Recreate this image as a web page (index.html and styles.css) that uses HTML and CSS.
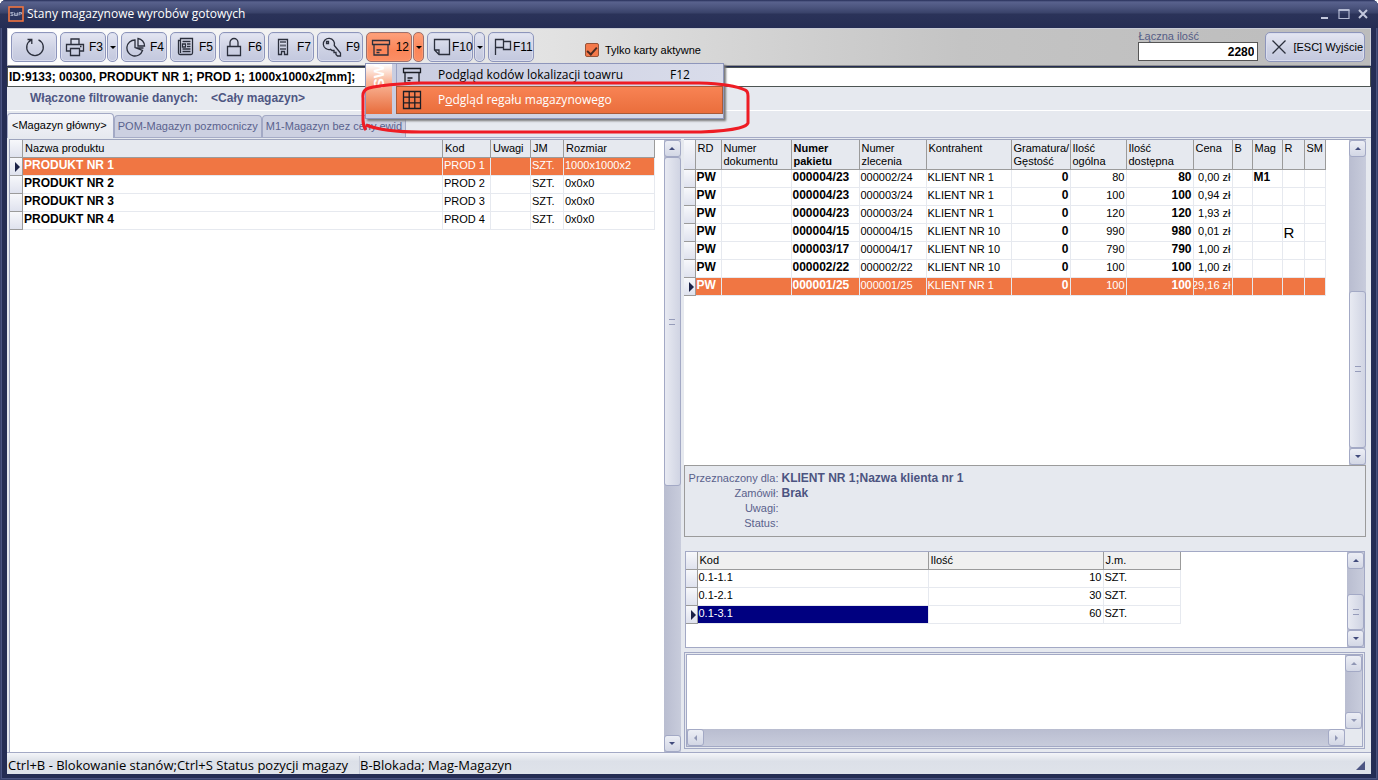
FILE: index.html
```html
<!DOCTYPE html>
<html lang="pl">
<head>
<meta charset="utf-8">
<title>Stany magazynowe wyrobów gotowych</title>
<link rel="stylesheet" href="styles.css">
</head>
<body>
<div class="window">
  <header class="titlebar">
    <svg class="app-icon" width="16" height="16" viewBox="0 0 16 16"><rect x="1" y="1" width="14" height="14" fill="#2b355f" stroke="#f0743f" stroke-width="1.6"/><path d="M2.500 6.500H5.500M3 6.500V8H5V9.500H2.500M6.500 6.500V9.500H9.500V6.500M8 7V9.500M11 9.500V6.500H13.500V8H11" stroke="#b9c0d8" stroke-width=".8" fill="none"/></svg>
    <h1>Stany magazynowe wyrobów gotowych</h1>
    <div class="win-buttons">
      <button aria-label="Minimalizuj"><svg width="12" height="12" viewBox="0 0 12 12"><path d="M2 10h7" stroke="#c3c8dd" stroke-width="2"/></svg></button>
      <button aria-label="Maksymalizuj"><svg width="12" height="12" viewBox="0 0 12 12"><path d="M1 2.500h10v8H1z" stroke="#b4bad2" stroke-width="1.200" fill="none"/><path d="M.5 2h11" stroke="#b4bad2" stroke-width="2"/></svg></button>
      <button aria-label="Zamknij"><svg width="12" height="12" viewBox="0 0 12 12"><path d="M2 2l8 8M10 2l-8 8" stroke="#c3c8dd" stroke-width="2"/></svg></button>
    </div>
  </header>

  <div class="toolbar">
    <button class="tool tool-center" aria-label="Odśwież"><svg width="20" height="20" viewBox="0 0 20 20"><path d="M13.500 2.800A8.300 8.300 0 1 1 6.500 2.800M2.500 2.500H6.800V7" /></svg></button>
    <div class="split">
      <button class="tool"><svg width="20" height="20" viewBox="0 0 20 20"><path d="M6 7V2h8v5M5 14H1.500V7.500h17V14H15M5.500 11.500h9v7h-9zM15 9.500h1.500"/></svg>F3</button>
      <button class="drop" aria-label="Więcej F3"></button>
    </div>
    <button class="tool"><svg width="20" height="20" viewBox="0 0 20 20"><path d="M9 3A8 8 0 1 0 16.500 13.500L9 10.500zM12 1.500V9l6.500 0A7.500 7.500 0 0 0 12 1.500zM9.500 11H17.500"/></svg>F4</button>
    <button class="tool"><svg width="20" height="20" viewBox="0 0 20 20"><path d="M5.500 3.500h-2v12.500a1.500 1.500 0 0 0 1.500 1.500h11a1.500 1.500 0 0 0 1.500-1.500V1.500h-12v14.500M7.500 4.500h8M7.500 7h3v3h-3zM12 7h3.500M12 9.500h3.500M7.500 12h8M7.500 14.500h8"/></svg>F5</button>
    <button class="tool"><svg width="20" height="20" viewBox="0 0 20 20"><path d="M3.500 9.500h13v9h-13zM6 9.500V5.500a4 4 0 0 1 8 0v4"/></svg>F6</button>
    <button class="tool"><svg width="20" height="20" viewBox="0 0 20 20"><path d="M5.500 17.500v-15h9v15h-3v-3h-3v3zM8 4v2M10 4v2M12 4v2M8 7.500v2M10 7.500v2M12 7.500v2M8 11v2M10 11v2M12 11v2"/></svg>F7</button>
    <button class="tool"><svg width="20" height="20" viewBox="0 0 20 20"><path d="M12.300 8.500A5.600 5.600 0 1 0 8.500 12.300L10 13.500h2v2h2v2l1.500 1.500h3V16zM4.500 4.500h2v2h-2z"/></svg>F9</button>
    <div class="split split-open">
      <button class="tool"><svg width="20" height="20" viewBox="0 0 20 20"><path d="M1.500 3.500h17v4h-17zM3 7.500v10.500h14V7.500M5.500 13h5M5.500 15.500h3"/></svg>12</button>
      <button class="drop" aria-label="Więcej 12"></button>
      <div class="menu">
        <div class="menu-strip"><span>SW</span></div>
        <div class="menu-items">
          <button class="menu-item"><svg width="20" height="20" viewBox="0 0 20 20"><path d="M1.500 3.500h17v4h-17zM3 7.500v10.500h14V7.500M5.500 13h5M5.500 15.500h3"/></svg><span class="menu-text">Podgląd kodów lokalizacji toawru</span><span class="menu-key">F12</span></button>
          <button class="menu-item menu-hot"><svg width="20" height="20" viewBox="0 0 20 20"><path d="M1.500 1.500h17v17h-17zM7.200 1.500v17M12.800 1.500v17M1.500 7.200h17M1.500 12.800h17"/></svg><span class="menu-text">P<u>o</u>dgląd regału magazynowego</span></button>
        </div>
        <svg class="marker" width="392" height="58" viewBox="0 0 392 58"><path d="M5 50Q2 46 2 40V18Q1 10 8 8Q24 4 60 3H338Q372 4 384 10Q387 11 387 16V43Q386 46 378 48Q366 51 340 52H60Q22 52 5 45"/></svg>
      </div>
    </div>
    <div class="split">
      <button class="tool"><svg width="20" height="20" viewBox="0 0 20 20"><path d="M2.500 2.500h15v15H7L2.500 13zM2.500 13H7v4.500"/></svg>F10</button>
      <button class="drop" aria-label="Więcej F10"></button>
    </div>
    <button class="tool"><svg width="20" height="20" viewBox="0 0 20 20"><path d="M2.500 18V2.500h8v8h-8M10.500 4.500h7v8h-7v-2"/></svg>F11</button>
    <label class="check"><input type="checkbox" checked>Tylko karty aktywne</label>
    <div class="total"><label for="sum">Łączna ilość</label><input id="sum" type="text" value="2280"></div>
    <button class="exit"><svg width="16" height="16" viewBox="0 0 16 16"><path d="M1.500 1.500l13 13M14.500 1.500l-13 13"/></svg>[ESC] Wyjście</button>
  </div>

  <input class="product" type="text" aria-label="Produkt" value="ID:9133; 00300, PRODUKT NR 1; PROD 1; 1000x1000x2[mm];">
  <div class="filter"><span>Włączone filtrowanie danych:</span><span>&lt;Cały magazyn&gt;</span></div>
  <nav class="tabs">
    <button class="tab tab-on">&lt;Magazyn główny&gt;</button><button class="tab">POM-Magazyn pozmocniczy</button><button class="tab">M1-Magazyn bez ceny ewid</button>
  </nav>

  <main class="content">
    <section class="left">
      <div class="grid-area">
        <table class="grid products">
          <colgroup><col class="c13"><col class="c420"><col class="c48"><col class="c40"><col class="c33"><col class="c91"></colgroup>
          <thead><tr><th></th><th>Nazwa produktu</th><th>Kod</th><th>Uwagi</th><th>JM</th><th>Rozmiar</th></tr></thead>
          <tbody>
            <tr class="sel"><td class="mark"></td><td class="b">PRODUKT NR 1</td><td>PROD 1</td><td></td><td>SZT.</td><td>1000x1000x2</td></tr>
            <tr><td></td><td class="b">PRODUKT NR 2</td><td>PROD 2</td><td></td><td>SZT.</td><td>0x0x0</td></tr>
            <tr><td></td><td class="b">PRODUKT NR 3</td><td>PROD 3</td><td></td><td>SZT.</td><td>0x0x0</td></tr>
            <tr><td></td><td class="b">PRODUKT NR 4</td><td>PROD 4</td><td></td><td>SZT.</td><td>0x0x0</td></tr>
          </tbody>
        </table>
      </div>
      <div class="scroll"><button class="sb up" aria-label="W górę"></button><div class="thumb thumb-a"></div><div class="space"></div><button class="sb down" aria-label="W dół"></button></div>
    </section>

    <section class="right">
      <div class="packages">
        <div class="grid-area">
          <table class="grid stock">
            <colgroup><col class="c12"><col class="c26"><col class="c70"><col class="c68"><col class="c67"><col class="c85"><col class="c59"><col class="c56"><col class="c67"><col class="c39"><col class="c20"><col class="c30"><col class="c22"><col class="c21"></colgroup>
            <thead><tr><th></th><th>RD</th><th>Numer<br>dokumentu</th><th class="b">Numer<br>pakietu</th><th>Numer<br>zlecenia</th><th>Kontrahent</th><th>Gramatura/<br>Gęstość</th><th>Ilość<br>ogólna</th><th>Ilość<br>dostępna</th><th>Cena</th><th>B</th><th>Mag</th><th>R</th><th>SM</th></tr></thead>
            <tbody>
              <tr><td></td><td class="b">PW</td><td></td><td class="b">000004/23</td><td>000002/24</td><td>KLIENT NR 1</td><td class="b n">0</td><td class="n">80</td><td class="b n">80</td><td class="n">0,00 zł</td><td></td><td class="b">M1</td><td></td><td></td></tr>
              <tr><td></td><td class="b">PW</td><td></td><td class="b">000004/23</td><td>000003/24</td><td>KLIENT NR 1</td><td class="b n">0</td><td class="n">100</td><td class="b n">100</td><td class="n">0,94 zł</td><td></td><td></td><td></td><td></td></tr>
              <tr><td></td><td class="b">PW</td><td></td><td class="b">000004/23</td><td>000003/24</td><td>KLIENT NR 1</td><td class="b n">0</td><td class="n">120</td><td class="b n">120</td><td class="n">1,93 zł</td><td></td><td></td><td></td><td></td></tr>
              <tr><td></td><td class="b">PW</td><td></td><td class="b">000004/15</td><td>000004/15</td><td>KLIENT NR 10</td><td class="b n">0</td><td class="n">990</td><td class="b n">980</td><td class="n">0,01 zł</td><td></td><td></td><td class="big">R</td><td></td></tr>
              <tr><td></td><td class="b">PW</td><td></td><td class="b">000003/17</td><td>000004/17</td><td>KLIENT NR 10</td><td class="b n">0</td><td class="n">790</td><td class="b n">790</td><td class="n">1,00 zł</td><td></td><td></td><td></td><td></td></tr>
              <tr><td></td><td class="b">PW</td><td></td><td class="b">000002/22</td><td>000002/22</td><td>KLIENT NR 10</td><td class="b n">0</td><td class="n">100</td><td class="b n">100</td><td class="n">1,00 zł</td><td></td><td></td><td></td><td></td></tr>
              <tr class="sel"><td class="mark"></td><td class="b">PW</td><td></td><td class="b">000001/25</td><td>000001/25</td><td>KLIENT NR 1</td><td class="b n">0</td><td class="n">100</td><td class="b n">100</td><td class="n"><div class="tight">29,16 zł</div></td><td></td><td></td><td></td><td></td></tr>
            </tbody>
          </table>
        </div>
        <div class="scroll"><button class="sb up" aria-label="W górę"></button><div class="space"></div><div class="thumb thumb-b"></div><button class="sb down" aria-label="W dół"></button></div>
      </div>

      <dl class="info">
        <dt>Przeznaczony dla:</dt><dd>KLIENT NR 1;Nazwa klienta nr 1</dd>
        <dt>Zamówił:</dt><dd>Brak</dd>
        <dt>Uwagi:</dt><dd></dd>
        <dt>Status:</dt><dd></dd>
      </dl>

      <div class="places">
        <div class="grid-area">
          <table class="grid shelf">
            <colgroup><col class="c12"><col class="c231"><col class="c175"><col class="c77"></colgroup>
            <thead><tr><th></th><th>Kod</th><th>Ilość</th><th>J.m.</th></tr></thead>
            <tbody>
              <tr><td></td><td>0.1-1.1</td><td class="n">10</td><td>SZT.</td></tr>
              <tr><td></td><td>0.1-2.1</td><td class="n">30</td><td>SZT.</td></tr>
              <tr><td class="mark"></td><td class="active">0.1-3.1</td><td class="n">60</td><td>SZT.</td></tr>
            </tbody>
          </table>
        </div>
        <div class="scroll"><button class="sb up" aria-label="W górę"></button><div class="space"></div><div class="thumb thumb-c"></div><button class="sb down" aria-label="W dół"></button></div>
      </div>

      <div class="notes">
        <div class="notes-in">
          <textarea aria-label="Opis"></textarea>
          <div class="scroll off"><button class="sb up" aria-label="W górę"></button><div class="space"></div><button class="sb down" aria-label="W dół"></button></div>
          <div class="hscroll off"><button class="sb prev" aria-label="W lewo"></button><div class="space"></div><button class="sb next" aria-label="W prawo"></button></div>
          <div class="corner"></div>
        </div>
      </div>
    </section>
  </main>

  <footer class="status"><span class="status-a">Ctrl+B - Blokowanie stanów;Ctrl+S Status pozycji magazy</span><span class="status-b">B-Blokada; Mag-Magazyn</span><svg class="grip" width="10" height="10" viewBox="0 0 10 10"><path d="M9 0V9H0z" fill="#4c5583"/></svg></footer>
</div>
</body>
</html>
```
FILE: styles.css
```css
* { box-sizing: border-box; }
body { margin: 0; background: #fff; font: 11px/14px "Liberation Sans", Arial, sans-serif; color: #000; }
button, input, textarea { font: inherit; color: inherit; margin: 0; padding: 0; border: 0; border-radius: 0; background: none; }
h1, dl, dd { margin: 0; }
svg { flex: none; }

.window { height: 100vh; display: flex; flex-direction: column; padding: 0 7px 6px; border-radius: 6px 6px 0 0; background: #252d54; box-shadow: inset 0 0 0 1px #39426c, inset 0 0 0 2px #4a5380; }

.titlebar { height: 28px; flex: none; margin: 0 -7px; padding: 0 9px 0 8px; display: flex; align-items: center; gap: 3px; border-radius: 6px 6px 0 0; background: linear-gradient(#262e58, #59628d 2px, #4c557f 7px, #394269 13px, #2b3359 14px, #252d54); color: #fff; }
.titlebar h1 { flex: 1; font: 12px/16px "Open Sans", sans-serif; }
.win-buttons { display: flex; gap: 7px; }
.win-buttons button { display: flex; }

.toolbar { height: 38px; flex: none; padding: 3px 5px 3px 3px; display: flex; gap: 3px; border: 1px solid #c9ccd6; border-bottom-color: #8f9090; background: linear-gradient(90deg, #fff, #e2e2e2 40%, #c4c4c4 70%, #bcbcbc); font-size: 12px; }
.tool, .drop, .exit { height: 30px; border: 1px solid #8d95bb; border-radius: 5px; background: linear-gradient(#e4e6f2, #ced2e4 55%, #c3c8de); box-shadow: inset 0 0 0 1px #dadded; display: flex; align-items: center; }
.tool { width: 46px; flex: none; padding: 0 2px 0 4px; justify-content: space-between; }
.tool-center { justify-content: center; }
.tool svg, .exit svg, .menu svg { fill: none; stroke: #2b2f3c; stroke-width: 1.3; }
.split { display: flex; gap: 1px; position: relative; }
.drop { width: 11px; justify-content: center; }
.drop::before { content: ""; border: 3px solid transparent; border-top-color: #000; border-bottom: 0; }
.split-open > .tool, .split-open > .drop { background: linear-gradient(#fda17c, #fb8558 60%, #fa8f66); border-color: #9b706e; box-shadow: inset 0 0 0 1px #ff9a70; }
.check { display: flex; align-items: center; gap: 6px; margin: 6px auto 0 48px; font-size: 11px; }
.check input { appearance: none; width: 14px; height: 14px; border: 1px solid #96543a; border-radius: 2px; background: #f4794a; display: grid; place-items: center; }
.check input::before { content: ""; width: 8px; height: 4px; border: solid #4a2b23; border-width: 0 0 2px 2px; transform: rotate(-48deg); }
.total { width: 120px; display: flex; flex-direction: column; color: #555c85; margin-top: -2px; font-size: 11px; }
.total label { line-height: 12px; }
.total input { width: 100%; height: 19px; border: 1px solid #555; background: #fff; padding: 0 3px; text-align: right; font-weight: bold; font-size: 12px; color: #000; }
.exit { padding: 0 1px 0 5px; gap: 6px; margin-left: 4px; white-space: nowrap; font-size: 11px; }

.menu { position: absolute; z-index: 5; left: -1px; top: 31px; width: 359px; height: 56px; display: flex; border: 1px solid #8e96bb; background: linear-gradient(90deg, #c8cce0, #d9dcea); box-shadow: 2px 2px 2px #777; padding-bottom: 4px; font: 12px/16px "Open Sans", sans-serif; }
.menu-strip { width: 26px; flex: none; background: linear-gradient(#fff, #f9b79a 35%, #e86c3b); color: #fff; font: bold 15px/20px "Liberation Sans", sans-serif; }
.menu-strip span { display: block; writing-mode: vertical-rl; margin: 0 auto; transform: rotate(180deg); }
.menu-items { flex: 1; margin-left: 4px; display: flex; flex-direction: column; }
.menu-item { display: flex; align-items: center; height: 22px; padding-left: 5px; text-align: left; border-left: 1px solid #9ba2c4; }
.menu-item svg { stroke: #1b1d25; }
.menu-text { margin-left: 16px; width: 232px; white-space: nowrap; }
.menu-hot { height: 29px; color: #fff; border: 1px solid #a85a38; background: linear-gradient(#f88354, #ea6e3c); }
.marker { position: absolute; left: -5px; top: 16px; pointer-events: none; }
.menu .marker { stroke: #ee1c24; stroke-width: 3; }

.product { width: 100%; height: 20px; flex: none; margin-top: 1px; border: 1px solid #4d5553; background: #fff; padding: 0 1px; font-weight: bold; font-size: 12px; }
.filter { height: 24px; flex: none; display: flex; gap: 13px; padding: 0 23px 1px; align-items: center; background: #e6e9ef; border-bottom: 1px solid #fff; color: #4f5783; font-weight: bold; font-size: 12px; }
.tabs { height: 27px; flex: none; display: flex; align-items: flex-end; padding-top: 2px; background: #e6e9ef; border-bottom: 1px solid #a5abc6; font-size: 11px; }
.tab { height: 22px; padding: 0 3px 2px; color: #5a628e; background: #ccd0e1; border: 1px solid #a3a9c5; border-bottom: 0; border-radius: 4px 4px 0 0; }
.tab-on { height: 25px; padding: 0 6px 2px 4px; margin-bottom: -1px; color: #000; background: linear-gradient(#f4f5fa, #e6e9ef); }

.content { flex: 1; min-height: 0; display: flex; gap: 3px; padding: 1px 5px 0 2px; background: #e6e9ef; border-bottom: 1px solid #a3a9c5; }
.left { flex: 671 1 0; display: flex; background: #fff; border: 1px solid #9da4bd; border-width: 1px 0 0 1px; }
.right { flex: 683 1 0; min-width: 0; display: flex; flex-direction: column; }
.grid-area { flex: 1; min-width: 0; overflow: hidden; }

.grid { table-layout: fixed; border-collapse: separate; border-spacing: 0; }
.grid th, .grid td { padding: 0 1px; text-align: left; vertical-align: top; white-space: nowrap; overflow: hidden; border: solid #e6e9ef; border-width: 0 1px 1px 0; font-weight: normal; }
.grid td { height: 18px; line-height: 15px; }
.grid th { padding: 2px 2px 0; line-height: 13px; background: #e6e9ef; border-color: #9b9b9b; }
.grid .b { font-weight: bold; font-size: 12px; }
.grid th.b { font-size: 11px; }
.grid .n { text-align: right; }
.grid tr > :first-child { background: linear-gradient(#f7f8fb, #dfe2ee); border-color: #9b9b9b; padding: 0; }
.sel td { background: #f07643; color: #fff; }
.mark::before { content: ""; display: block; width: 0; margin: 4px 0 0 5px; border: 5px solid transparent; border-left-color: #1b2247; border-right: 0; }
.grid .big { font-size: 15px; line-height: 17px; }
.tight { display: flex; justify-content: flex-end; }
.products { width: 645px; }
.products th { height: 18px; }
.stock { width: 642px; }
.stock th { height: 30px; }
.shelf { width: 495px; }
.shelf th { height: 18px; background: #f0f0f0; }
.shelf .active { background: #000080; color: #fff; }
.c12 { width: 12px; } .c13 { width: 13px; } .c20 { width: 20px; } .c21 { width: 21px; } .c22 { width: 22px; } .c26 { width: 26px; }
.c30 { width: 30px; } .c33 { width: 33px; } .c39 { width: 39px; } .c40 { width: 40px; } .c48 { width: 48px; } .c56 { width: 56px; }
.c59 { width: 59px; } .c67 { width: 67px; } .c68 { width: 68px; } .c70 { width: 70px; } .c77 { width: 77px; } .c85 { width: 85px; }
.c91 { width: 91px; } .c175 { width: 175px; } .c231 { width: 231px; } .c420 { width: 420px; }

.scroll { width: 17px; flex: none; display: flex; flex-direction: column; background: linear-gradient(90deg, #b9bdd0, #c8ccdc); }
.hscroll { height: 17px; display: flex; background: linear-gradient(#b9bdd0, #c8ccdc); }
.space { flex: 1; }
.sb, .thumb { width: 17px; height: 17px; flex: none; display: grid; place-items: center; border: 1px solid #a3a9c5; border-radius: 3px; background: linear-gradient(#eceef5, #d3d7e5); }
.thumb { background: linear-gradient(90deg, #e8eaf2, #d0d4e3); }
.thumb::before { content: ""; width: 6px; height: 4px; border: solid #969cba; border-width: 1px 0; }
.thumb-a { height: calc((100% - 34px) * 0.57); }
.thumb-b { height: calc((100% - 34px) * 0.54); }
.thumb-c { height: 36px; }
.sb::before { content: ""; border: 3px solid transparent; }
.up::before { border-top: 0; border-bottom-color: #414b7c; }
.down::before { border-bottom: 0; border-top-color: #414b7c; }
.prev::before { border-left: 0; border-right-color: #414b7c; }
.next::before { border-right: 0; border-left-color: #414b7c; }
.off .sb::before { opacity: .5; }

.packages { flex: 1; min-height: 0; display: flex; background: #fff; border-top: 1px solid #9da4bd; }
.info { flex: none; padding: 5px 4px; display: grid; grid-template-columns: 90px 1fr; gap: 0 3px; line-height: 15px; border: 1px solid #9b9b9b; color: #5a618c; }
.info dt { text-align: right; white-space: nowrap; }
.info dd { font-weight: bold; font-size: 12px; color: #4c5481; }
.places { height: 97px; flex: none; margin: 14px 1px 4px; display: flex; background: #fff; border: 1px solid #a3a9c5; }
.notes { flex: none; margin: 0 1px 3px 0; padding: 1px; border: 1px solid #a3a9c5; }
.notes-in { display: grid; grid-template: 74px 17px / 1fr 17px; border: 1px solid #a3a9c5; }
.notes textarea { width: 100%; height: 100%; resize: none; background: #fff; }
.corner { background: #e6e9ef; }

.status { height: 21px; flex: none; display: flex; align-items: center; padding: 2px 5px 0 1px; background: linear-gradient(#f4f5f9, #dce0e8 40%, #dfe3ea); font: 13px/18px "Open Sans", sans-serif; }
.status-a { width: 352px; white-space: nowrap; border-right: 1px solid #c5cad8; }
.status-b { flex: 1; }
.grip { align-self: flex-end; margin-bottom: 3px; }
```
